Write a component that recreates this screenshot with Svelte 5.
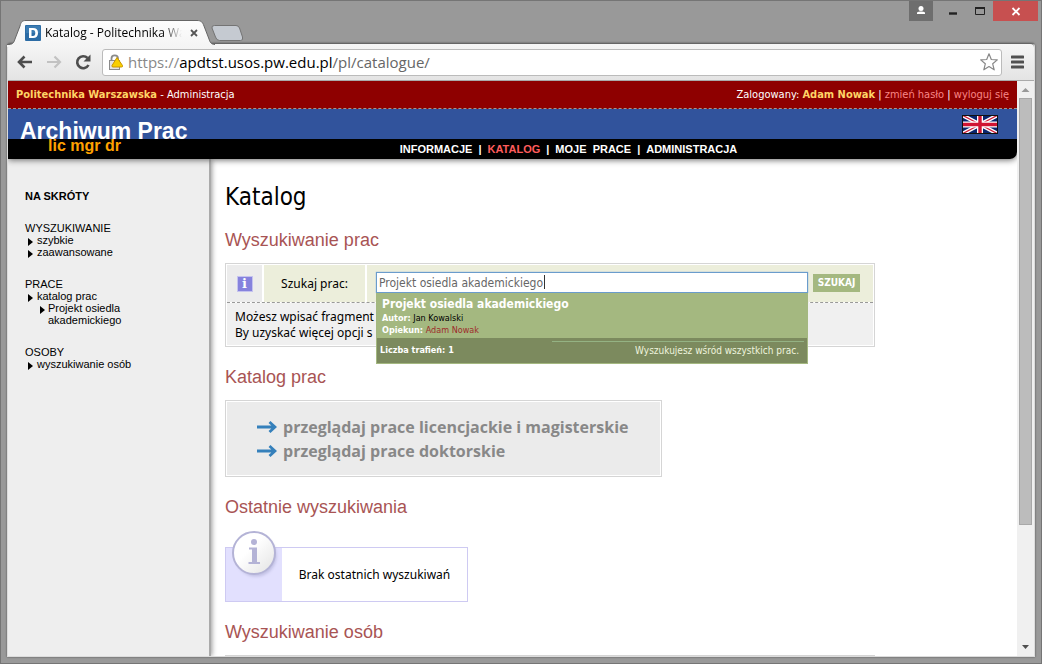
<script>
  let query = $state('Projekt osiedla akademickiego');

  const nav = [
    { label: 'INFORMACJE' },
    { label: 'KATALOG', current: true },
    { label: 'MOJE \u00a0PRACE' },
    { label: 'ADMINISTRACJA' }
  ];

  const browse = ['przeglądaj prace licencjackie i magisterskie', 'przeglądaj prace doktorskie'];
</script>

<div class="window">
  <div class="titlebar">
    <div class="tabs">
      <svg class="tabshape" viewBox="0 0 240 28" width="240" height="28" aria-hidden="true">
        <defs>
          <linearGradient id="tabfill" x1="0" y1="0" x2="0" y2="1">
            <stop offset="0" stop-color="#fdfdfd" /><stop offset="1" stop-color="#f4f4f4" />
          </linearGradient>
        </defs>
        <path d="M0 25.5H2C6 25.5 7 23 8 20L13 7C14 3 15 1.500 19 1.500H190C194 1.500 195.500 3 197 7L202 20C203 23 204 25.500 208 25.500V28H0Z" fill="url(#tabfill)" />
        <path d="M0 25.500H2C6 25.500 7 23 8 20L13 7C14 3 15 1.500 19 1.500H190C194 1.500 195.500 3 197 7L202 20C203 23 204 25.500 208 25.500" fill="none" stroke="#666" />
        <path d="M207.500 6.500H229Q231.500 6.500 232.500 9L235.500 18Q236.500 21.500 233.500 21.500H212.500Q209.500 21.500 208.500 18L205 9Q204.500 6.500 207.500 6.500Z" fill="#c5cad1" stroke="#747474" />
      </svg>
      <div class="tab">
        <svg class="favicon" viewBox="0 0 16 16" width="16" height="16" aria-hidden="true">
          <rect width="16" height="16" rx="1" fill="#2c6ca5" /><rect x="1" y="1" width="14" height="7" fill="#4887bb" opacity=".6" />
          <path d="M4 3H8Q13 3 13 8T8 13H4ZM6.500 5V11H8Q10.300 11 10.300 8T8 5Z" fill="#fff" fill-rule="evenodd" />
        </svg>
        <span class="title">Katalog - Politechnika Warszawska</span>
        <button class="plain close" aria-label="Zamknij kartę">
          <svg viewBox="0 0 8 8" width="8" height="8"><path d="M1 1L7 7M7 1L1 7" stroke="#555" stroke-width="1.800" /></svg>
        </button>
      </div>
    </div>
    <div class="controls">
      <button class="plain user" aria-label="Profil">
        <svg viewBox="0 0 24 20" width="24" height="20"><circle cx="12" cy="7.500" r="2.500" fill="#fff" /><path d="M8 13V11.500Q9 10.500 12 10.500T16 11.500V13Z" fill="#fff" /></svg>
      </button>
      <button class="plain min" aria-label="Minimalizuj"><svg viewBox="0 0 30 20" width="30" height="20"><path d="M16 12.500H24" stroke="#222" stroke-width="2.400" /></svg></button>
      <button class="plain max" aria-label="Maksymalizuj"><svg viewBox="0 0 30 20" width="30" height="20"><path d="M12.500 7V13.500H21.500V7" fill="none" stroke="#222" /><path d="M12 7H22" stroke="#222" stroke-width="2" /></svg></button>
      <button class="plain quit" aria-label="Zamknij"><svg viewBox="0 0 45 20" width="45" height="20"><path d="M19.500 7L26.500 14M26.500 7L19.500 14" stroke="#fff" stroke-width="1.800" /></svg></button>
    </div>
  </div>

  <div class="client">
    <div class="toolbar">
      <button class="plain" aria-label="Wstecz"><svg viewBox="0 0 18 18" width="18" height="18"><path d="M2.500 9H16M8.500 3.500L3 9L8.500 14.500" fill="none" stroke="#4d4d4d" stroke-width="2.600" /></svg></button>
      <button class="plain" aria-label="Dalej"><svg viewBox="0 0 18 18" width="18" height="18"><path d="M2 9H15.500M9.500 3.500L15 9L9.500 14.500" fill="none" stroke="#c2c2c2" stroke-width="2.200" /></svg></button>
      <button class="plain" aria-label="Odśwież"><svg viewBox="0 0 18 18" width="18" height="18"><path d="M14.500 12A6 6 0 1 1 13.500 5" fill="none" stroke="#4d4d4d" stroke-width="2.600" /><path d="M16.500 1.500V8.500H9.500Z" fill="#4d4d4d" /></svg></button>
      <div class="address">
        <svg viewBox="0 0 16 17" width="16" height="17" aria-hidden="true">
          <path d="M3.500 7V4.500A3.200 3 0 0 1 10 4.500V7" fill="none" stroke="#8a8a8a" stroke-width="1.800" />
          <rect x="1.500" y="6.500" width="10" height="9" fill="#e4e4e4" stroke="#8a8a8a" />
          <path d="M9 3.500L14.500 11.500Q15 13 13.500 13H5Q3.500 13 4 11.500Z" fill="#f8cf00" stroke="#c99400" stroke-linejoin="round" />
        </svg>
        <span class="url"><span>https://</span><b>apdtst.usos.pw.edu.pl</b>/pl/catalogue/</span>
        <svg viewBox="0 0 20 20" width="20" height="20" aria-hidden="true"><path d="M10 1.800L12.300 7.500L18.300 7.900L13.700 11.800L15.200 17.800L10 14.500L4.800 17.800L6.300 11.800L1.700 7.900L7.700 7.500Z" fill="#fff" stroke="#888" stroke-width="1.200" stroke-linejoin="round" /></svg>
      </div>
      <button class="plain menu" aria-label="Menu"><svg viewBox="0 0 13 14" width="13" height="14"><path d="M1 2H12M1 7H12M1 12H12" stroke="#505050" stroke-width="3" stroke-linecap="round" /></svg></button>
    </div>

    <div class="view">
      <div class="page">
        <header>
          <div class="userbar">
            <div><strong>Politechnika Warszawska</strong> - Administracja</div>
            <div>Zalogowany: <strong>Adam Nowak</strong> | <a href="#haslo">zmień hasło</a> | <a href="#wyloguj">wyloguj się</a></div>
          </div>
          <div class="brand">
            <div class="logo">Archiwum Prac</div>
            <svg viewBox="0 0 36 19" width="36" height="19" role="img" aria-label="English">
              <rect width="36" height="19" fill="#08246e" />
              <path d="M0 0L36 19M36 0L0 19" stroke="#fff" stroke-width="4" />
              <path d="M0 0L18 9.500M36 0L18 9.500M0 19L18 9.500M36 19L18 9.500" stroke="#d0203a" stroke-width="1.300" />
              <path d="M18 0V19M0 9.500H36" stroke="#fff" stroke-width="6" />
              <path d="M18 0V19M0 9.500H36" stroke="#d01432" stroke-width="3.400" />
              <rect x=".5" y=".5" width="35" height="18" fill="none" stroke="#111" />
            </svg>
          </div>
          <nav>
            <span class="sub">lic mgr dr</span>
            <ul>
              {#each nav as item, i}
                {#if i}<li aria-hidden="true">|</li>{/if}
                <li><a href="#menu" class:current={item.current}>{item.label}</a></li>
              {/each}
            </ul>
          </nav>
        </header>

        <div class="columns">
          <aside>
            <h4>NA SKRÓTY</h4>
            <section><div>WYSZUKIWANIE</div>
              <ul><li><a href="#s">szybkie</a></li><li><a href="#z">zaawansowane</a></li></ul>
            </section>
            <section><div>PRACE</div>
              <ul><li><a href="#k">katalog prac</a>
                <ul><li><a href="#p">Projekt osiedla<br />akademickiego</a></li></ul>
              </li></ul>
            </section>
            <section><div>OSOBY</div>
              <ul><li><a href="#o">wyszukiwanie osób</a></li></ul>
            </section>
          </aside>

          <main>
            <h1>Katalog</h1>
            <h2>Wyszukiwanie prac</h2>
            <form class="search box" onsubmit={(e) => e.preventDefault()}>
              <div class="row">
                <div class="info"><span>i</span></div>
                <label for="q">Szukaj prac:</label>
                <div class="entry">
                  <div class="field">
                    <input id="q" type="text" bind:value={query} autocomplete="off" />
                    <span class="caret"></span>
                    <div class="suggest">
                      <div class="hit">
                        <strong>Projekt osiedla akademickiego</strong>
                        <div><b>Autor:</b> Jan Kowalski</div>
                        <div><b>Opiekun:</b> <a href="#nowak">Adam Nowak</a></div>
                      </div>
                      <div class="foot"><span>Liczba trafień: 1</span><em>Wyszukujesz wśród wszystkich prac.</em></div>
                    </div>
                  </div>
                  <button class="go">SZUKAJ</button>
                </div>
              </div>
              <div class="hint">Możesz wpisać fragment<br />By uzyskać więcej opcji s</div>
            </form>

            <h2>Katalog prac</h2>
            <div class="browse box">
              <ul>
                {#each browse as text}
                  <li>
                    <svg viewBox="0 0 20 14" width="20" height="14" aria-hidden="true"><path d="M0 7H18M12.500 2L18 7L12.500 12" fill="none" stroke="#3580bb" stroke-width="2.800" /></svg>
                    <a href="#browse">{text}</a>
                  </li>
                {/each}
              </ul>
            </div>

            <h2>Ostatnie wyszukiwania</h2>
            <div class="notice">
              <div class="side">
                <svg viewBox="0 0 52 52" width="52" height="52" aria-hidden="true">
                  <defs>
                    <linearGradient id="disc" x1="0" y1="0" x2="1" y2="1"><stop offset=".4" stop-color="#fff" /><stop offset="1" stop-color="#e2e2e2" /></linearGradient>
                    <filter id="soft"><feGaussianBlur stdDeviation="1.500" /></filter>
                  </defs>
                  <circle cx="26" cy="27" r="20.500" fill="#aaaad0" opacity=".6" filter="url(#soft)" />
                  <circle cx="24" cy="24" r="21" fill="url(#disc)" stroke="#b4b3d6" stroke-width="2" />
                  <circle cx="24" cy="13" r="3" fill="#b4b3d6" />
                  <path d="M19 18.500H27V33H30V35H18.500V33H22V20.500H19Z" fill="#b4b3d6" />
                </svg>
              </div>
              <p>Brak ostatnich wyszukiwań</p>
            </div>

            <h2>Wyszukiwanie osób</h2>
            <div class="box people"></div>
          </main>
        </div>
      </div>
      <div class="scroll" aria-hidden="true">
        <svg viewBox="0 0 17 17" width="17" height="17"><path d="M4.500 11L8.500 7L12.500 11Z" fill="#999" /></svg>
        <div class="track"><div class="thumb"></div></div>
        <svg viewBox="0 0 17 17" width="17" height="17"><path d="M5 6L8.500 10L12 6Z" fill="#505050" /></svg>
      </div>
    </div>
  </div>
</div>

<style>
  :global(body) { margin: 0; }
  :global(*) { box-sizing: border-box; }
  .window {
    height: 100vh; display: flex; flex-direction: column; overflow: hidden;
    padding: 0 6px 6px; background: #999; border: 1px solid #757575;
    font: 12px/16px "DejaVu Sans Condensed", "DejaVu Sans", sans-serif; color: #000;
  }
  ul { list-style: none; margin: 0; padding: 0; }
  a { color: inherit; text-decoration: none; }
  svg { display: block; flex: none; }
  .plain { border: 0; padding: 0; background: none; display: block; }

  .titlebar { display: flex; justify-content: space-between; height: 42px; flex: none; }
  .tabs { position: relative; padding: 21px 0 0 18px; width: 240px; }
  .tabshape { position: absolute; left: 0; top: 18px; z-index: 1; }
  .tab { position: relative; z-index: 2; display: flex; align-items: center; height: 22px; width: 173px; }
  .title {
    flex: 1; min-width: 0; margin: 0 8px 0 4px; overflow: hidden; white-space: nowrap;
    font: 12px/18px "Open Sans", sans-serif;
    mask-image: linear-gradient(to right, #000 86%, transparent);
  }
  .controls { display: flex; align-items: flex-start; margin-right: -3px; }
  .user { background: #6e6e6e; }
  .quit { background: #c75050; }

  .client {
    flex: 1; min-height: 0; display: flex; flex-direction: column;
    border: 1px solid #dcdcdc; border-top: 1px solid #666; border-radius: 4px 4px 0 0; box-shadow: 0 0 2px #444;
  }
  .toolbar {
    flex: none; height: 37px; display: flex; align-items: center; gap: 11px; padding: 0 10px 0 8px;
    background: linear-gradient(#f6f6f6, #e4e4e4); border-bottom: 1px solid #aaa; border-radius: 4px 4px 0 0;
  }
  .address {
    flex: 1; display: flex; align-items: center; gap: 4px; height: 27px; padding: 0 2px 0 5px; margin: 0 -2px 0 -1px;
    background: #fff; border: 1px solid #bbb; border-radius: 3px;
  }
  .url { flex: 1; font: 15px/20px "Open Sans", sans-serif; color: #666; }
  .url span { color: #888; }
  .url b { font-weight: 400; color: #000; }

  .view { flex: 1; min-height: 0; display: flex; background: #fff; }
  .page { flex: 1; min-width: 0; overflow: hidden; display: flex; flex-direction: column; }
  header { flex: none; position: relative; z-index: 2; border-radius: 0 0 7px 0; box-shadow: 0 1px 6px #666; overflow: hidden; }
  .userbar {
    display: flex; justify-content: space-between; height: 28px; padding: 0 8px; background: #8e0000;
    border-bottom: 1px dashed #a09a90; font-size: 11px; line-height: 27px; color: #fff;
  }
  .userbar strong { color: #ffd466; }
  .userbar a { color: #f98686; }
  .brand { height: 30px; display: flex; justify-content: space-between; padding: 6px 19px 0 12px; background: #31539c; }
  .logo { font: bold 23px/32px "Liberation Sans", sans-serif; color: #fff; }
  nav { position: relative; height: 20px; background: #000; color: #fff; font: bold 11px/20px "Liberation Sans", sans-serif; }
  nav ul { display: flex; justify-content: center; gap: 6px; padding-left: 112px; }
  .sub { position: absolute; left: 40px; top: -2px; font-size: 16px; line-height: 18px; color: #ffa200; }
  .current { color: #ff5c5c; }

  .columns { flex: 1; min-height: 0; display: flex; overflow: hidden; }
  aside {
    flex: none; width: 203px; padding: 31px 16px 0 17px; background: #eee; border-right: 2px solid #aaa;
    box-shadow: 1px 0 5px #999; font: 11px/12px "Liberation Sans", sans-serif;
  }
  h4 { margin: 0 0 20px; font-size: 11px; }
  aside section { margin-bottom: 20px; }
  aside li { position: relative; padding-left: 12px; }
  aside li li { padding-left: 11px; }
  aside li::before {
    content: ''; position: absolute; left: 3px; top: 4px;
    border: 4px solid transparent; border-left: 5px solid #000; border-right: 0;
  }

  main { flex: 1; min-width: 0; padding: 22px 14px 0; }
  h1 { margin: 0 0 17px; font-size: 24px; line-height: 32px; font-weight: 400; }
  h2 { margin: 0 0 13px; font: 18px/20px "Liberation Sans", sans-serif; color: #a85454; }
  .box { border: 1px solid #d5d5d5; padding: 1px; background: #fff; margin-bottom: 20px; }
  .search { max-width: 650px; }
  .row { display: flex; gap: 2px; height: 38px; border-bottom: 1px dashed #999; }
  .info { width: 35px; background: #ececec; display: grid; place-items: center; }
  .info span { width: 16px; height: 16px; background: #8682dd; border: 1px solid #c5c3ef; color: #fff; font: bold 13px/13px "DejaVu Serif", serif; text-align: center; }
  label { width: 101px; background: #eceedb; text-align: center; font: 12px/38px "Noto Sans", sans-serif; }
  .entry { flex: 1; min-width: 0; display: flex; align-items: center; gap: 5px; padding: 0 13px 2px 9px; background: #eceedb; }
  .field { position: relative; flex: 1; min-width: 0; }
  input {
    display: block; width: 100%; height: 21px; padding: 1px 2px 0; border: 1px solid #6a9ccc; outline: 0;
    box-shadow: 0 0 1px #6a9ce0; background: #fff; color: #666; font: inherit;
  }
  .caret { position: absolute; left: 168px; top: 3px; width: 1px; height: 14px; background: #333; }
  .suggest { position: absolute; z-index: 5; left: 0; right: 0; top: 21px; background: #a4b880; border: 1px solid #a4b880; border-top: 0; }
  .hit { height: 45px; padding: 3px 5px 0; font-size: 9px; line-height: 12px; }
  .hit strong { display: block; font-size: 12px; line-height: 16px; color: #fff; }
  .hit b { color: #fff; }
  .hit a { color: #9e2b2b; }
  .foot { display: flex; justify-content: space-between; height: 25px; padding: 3px 3px 0; background: #7c8a5e; color: #fff; font-size: 10px; line-height: 18px; }
  .foot span { font-size: 9px; font-weight: 700; }
  .foot em { width: 252px; padding-right: 5px; border-top: 1px solid #94b283; font-style: normal; text-align: right; color: #eef4dd; }
  .go { height: 18px; width: 47px; padding: 0; border: 0; background: #a4b880; color: #fff; font: bold 10px/18px "DejaVu Sans Condensed", sans-serif; }
  .hint { height: 42px; padding: 6px 8px 4px; background: #f0f0f0; font-family: "Noto Sans", sans-serif; }
  .browse { max-width: 437px; }
  .browse ul { padding: 13px 30px 12px; background: #ebebeb; }
  .browse li { display: flex; align-items: center; gap: 6px; font: bold 16px/24px "Open Sans", sans-serif; color: #888; white-space: nowrap; }
  .notice { display: flex; max-width: 243px; height: 55px; margin: 30px 0 20px; border: 1px solid #cecaf2; background: #fff; }
  .side { position: relative; width: 56px; background: #e2e0fe; }
  .side svg { position: absolute; left: 4px; top: -19px; }
  .notice p { flex: 1; margin: 0; text-align: center; font-family: "Noto Sans", sans-serif; line-height: 53px; white-space: nowrap; }
  .people { max-width: 650px; height: 84px; }

  .scroll { flex: none; width: 17px; display: flex; flex-direction: column; background: #f0f0f0; }
  .track { flex: 1; padding: 0 2px; }
  .thumb { height: 79%; background: #bcbcbc; border: 1px solid #a8a8a8; }
</style>
